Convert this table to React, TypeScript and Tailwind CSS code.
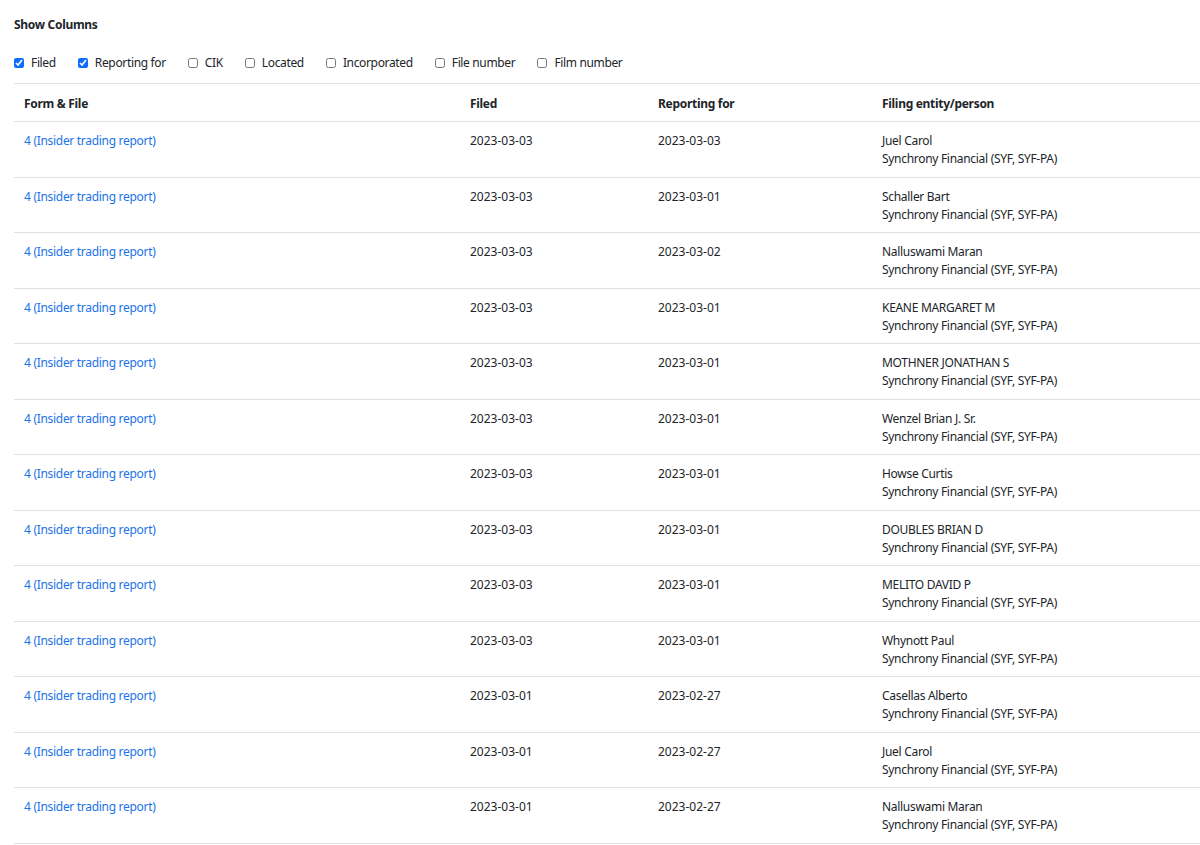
import { useState } from "react";

const rows = [
  ["2023-03-03", "2023-03-03", "Juel Carol"],
  ["2023-03-03", "2023-03-01", "Schaller Bart"],
  ["2023-03-03", "2023-03-02", "Nalluswami Maran"],
  ["2023-03-03", "2023-03-01", "KEANE MARGARET M"],
  ["2023-03-03", "2023-03-01", "MOTHNER JONATHAN S"],
  ["2023-03-03", "2023-03-01", "Wenzel Brian J. Sr."],
  ["2023-03-03", "2023-03-01", "Howse Curtis"],
  ["2023-03-03", "2023-03-01", "DOUBLES BRIAN D"],
  ["2023-03-03", "2023-03-01", "MELITO DAVID P"],
  ["2023-03-03", "2023-03-01", "Whynott Paul"],
  ["2023-03-01", "2023-02-27", "Casellas Alberto"],
  ["2023-03-01", "2023-02-27", "Juel Carol"],
  ["2023-03-01", "2023-02-27", "Nalluswami Maran"],
];

const columns = [
  { key: "filed", label: "Filed", on: true },
  { key: "reporting", label: "Reporting for", on: true },
  { key: "cik", label: "CIK", on: false },
  { key: "located", label: "Located", on: false },
  { key: "incorporated", label: "Incorporated", on: false },
  { key: "file", label: "File number", on: false },
  { key: "film", label: "Film number", on: false },
];

export default function App() {
  const [shown, setShown] = useState<Record<string, boolean>>(
    Object.fromEntries(columns.map((c) => [c.key, c.on]))
  );

  return (
    <div className="bg-white pl-[14px] pt-[16px] text-[12px] leading-[18px] text-[#212529] font-['Noto_Sans',sans-serif]">
      <div className="font-bold tracking-[-0.3px]">Show Columns</div>
      <div className="mt-[20px] flex items-center h-[18px]">
        {columns.map((c) => (
          <label key={c.key} className="flex items-center mr-[22px]">
            <input
              type="checkbox"
              checked={shown[c.key]}
              onChange={() => setShown({ ...shown, [c.key]: !shown[c.key] })}
              className="w-[10px] h-[10px] m-0 mr-[7px] accent-[#0d6efd]"
            />
            <span className="tracking-[-0.35px]">{c.label}</span>
          </label>
        ))}
      </div>
      <table className="mt-[11px] border-collapse table-fixed w-[1220px]">
        <colgroup>
          <col className="w-[446px]" />
          <col className="w-[188px]" />
          <col className="w-[224px]" />
          <col />
        </colgroup>
        <thead>
          <tr className="border-y border-[#dee2e6] h-[38px]">
            <th className="text-left font-bold px-[10px] pt-[2px] tracking-[-0.3px]">Form &amp; File</th>
            <th className="text-left font-bold px-[10px] pt-[2px] tracking-[-0.3px]">Filed</th>
            <th className="text-left font-bold px-[10px] pt-[2px] tracking-[-0.3px]">Reporting for</th>
            <th className="text-left font-bold px-[10px] pt-[2px] tracking-[-0.3px]">Filing entity/person</th>
          </tr>
        </thead>
        <tbody>
          {rows.map((r, i) => (
            <tr key={i} className="border-b border-[#dee2e6] align-top">
              <td className="px-[10px] pt-[10.25px] pb-[8.25px]">
                <a href="#" className="text-[#1a73e8] tracking-[-0.3px]">4 (Insider trading report)</a>
              </td>
              <td className="px-[10px] pt-[10.25px] pb-[8.25px]">{r[0]}</td>
              <td className="px-[10px] pt-[10.25px] pb-[8.25px]">{r[1]}</td>
              <td className="px-[10px] pt-[10.25px] pb-[8.25px] tracking-[-0.3px]">
                <div>{r[2]}</div>
                <div>Synchrony Financial (SYF, SYF-PA)</div>
              </td>
            </tr>
          ))}
        </tbody>
      </table>
    </div>
  );
}
